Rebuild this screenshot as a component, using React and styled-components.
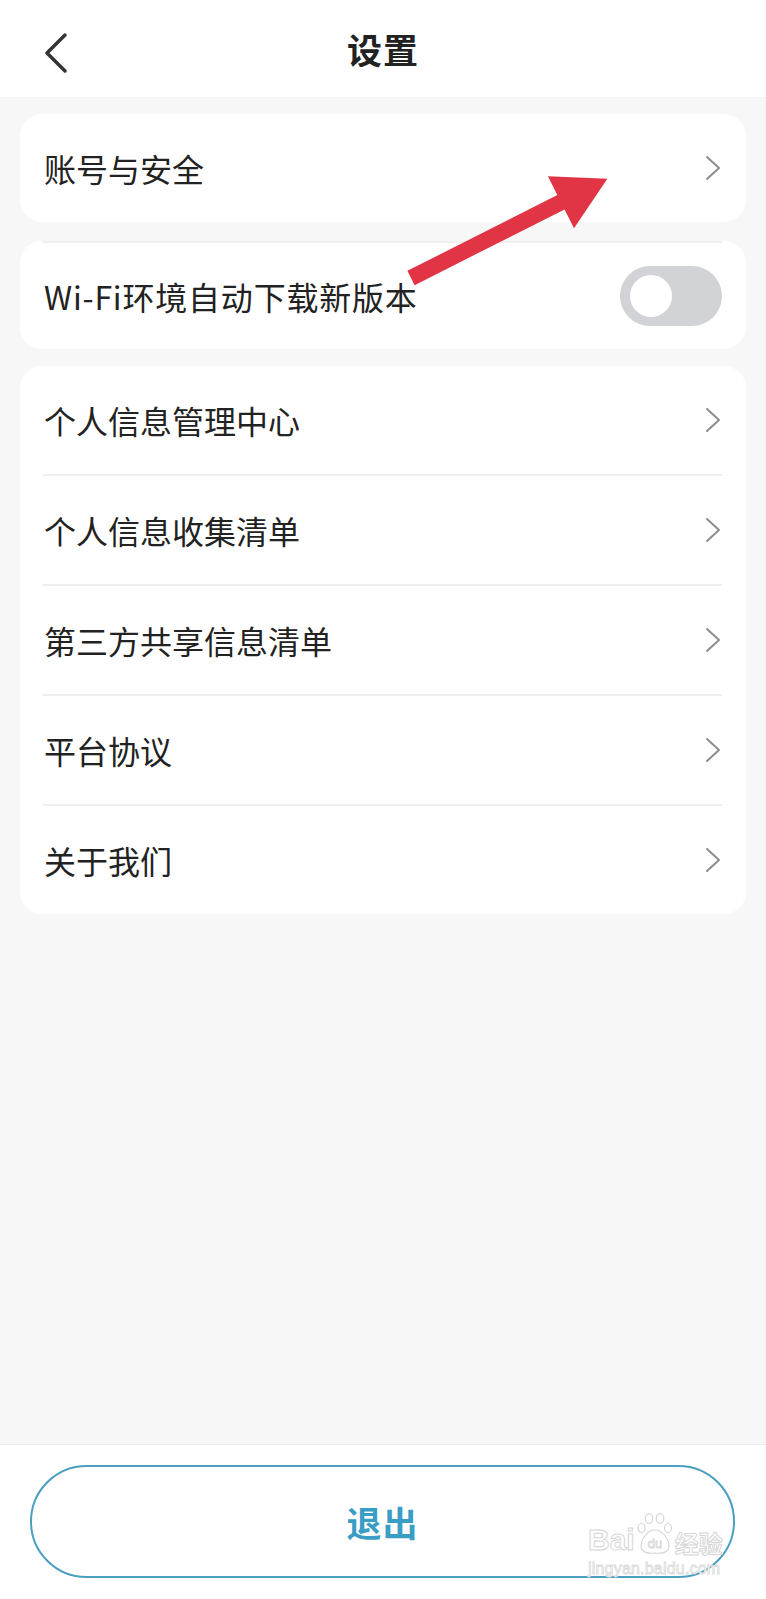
import styled, { createGlobalStyle } from "styled-components";

const GlobalStyle = createGlobalStyle`
  html, body {
    margin: 0;
    padding: 0;
    background: #f7f7f7;
  }
  body {
    font-family: "Noto Sans CJK SC", "Noto Sans", sans-serif;
  }
  #root {
    min-height: 100vh;
  }
`;

const Page = styled.div`
  position: relative;
  min-height: 100vh;
  display: flex;
  flex-direction: column;
  background: #f7f7f7;
`;

const Header = styled.header`
  height: 97px;
  background: #ffffff;
  display: flex;
  align-items: center;
  justify-content: center;
  position: relative;
  h1 {
    margin: 0;
    font-size: 35px;
    font-weight: 700;
    color: #222222;
    letter-spacing: 1px;
  }
`;

const BackButton = styled.button`
  position: absolute;
  left: 36px;
  top: 26px;
  width: 40px;
  height: 54px;
  border: none;
  background: none;
  padding: 0;
  display: flex;
  align-items: center;
  justify-content: center;
`;

const Content = styled.main`
  flex: 1;
  padding: 17px 20px 0;
  display: flex;
  flex-direction: column;
`;

const Card = styled.section`
  background: #ffffff;
  border-radius: 22px;
  margin-top: ${(p) => p.$gap || 0}px;
  overflow: hidden;
`;

const Row = styled.div`
  position: relative;
  height: ${(p) => p.$h || 108}px;
  padding: 0 24px 0 24px;
  display: flex;
  align-items: center;
  justify-content: space-between;
  span {
    font-size: 32px;
    color: #222222;
    line-height: 1;
    letter-spacing: ${(p) => p.$spacing || 0}px;
  }
`;

const TopLine = styled.div`
  height: 2px;
  margin: 0 24px 0 23px;
  background: #efefef;
`;

const Divider = styled.div`
  height: 2px;
  margin: 0 24px 0 23px;
  background: #eeeeee;
`;

const Toggle = styled.div`
  width: 102px;
  height: 60px;
  border-radius: 30px;
  background: #d2d3d6;
  display: flex;
  align-items: center;
  padding-left: 10px;
  box-sizing: border-box;
  &::after {
    content: "";
    width: 42px;
    height: 42px;
    border-radius: 50%;
    background: #ffffff;
  }
`;

const Footer = styled.footer`
  position: relative;
  height: 155px;
  background: #ffffff;
  border-top: 1px solid #eeeeee;
  box-sizing: border-box;
  padding: 20px 31px 0 30px;
`;

const LogoutButton = styled.button`
  width: 100%;
  height: 113px;
  border: 2px solid #4a9fc1;
  border-radius: 57px;
  background: #ffffff;
  color: #3a9dc6;
  font-family: "Noto Sans CJK SC", sans-serif;
  font-size: 35px;
  font-weight: 700;
  letter-spacing: 1px;
`;

const Watermark = styled.div`
  position: absolute;
  left: 588px;
  top: 1513px;
  width: 140px;
  pointer-events: none;
  color: #ffffff;
  font-family: "Liberation Sans", sans-serif;
`;

const MarkTop = styled.div`
  display: flex;
  align-items: flex-end;
  gap: 2px;
  span {
    font-size: 30px;
    font-weight: 700;
    line-height: 1;
    -webkit-text-stroke: 1px #d6d6d6;
  }
`;

const MarkUrl = styled.div`
  font-size: 16px;
  line-height: 1;
  margin-top: 6px;
  letter-spacing: 0.2px;
  -webkit-text-stroke: 0.8px #d9d9d9;
`;

const ArrowLayer = styled.svg`
  position: absolute;
  left: 0;
  top: 0;
  pointer-events: none;
`;

function Chevron() {
  return (
    <svg width="18" height="26" viewBox="0 0 18 26">
      <polyline points="3,2 15,13 3,24" fill="none" stroke="#8d8d8d" strokeWidth="2" strokeLinecap="round" strokeLinejoin="round" />
    </svg>
  );
}

function Paw() {
  return (
    <svg width="36" height="42" viewBox="0 0 36 42">
      <g fill="#ffffff" stroke="#d6d6d6" strokeWidth="1.2">
        <ellipse cx="4.5" cy="15" rx="3.5" ry="4.5" />
        <ellipse cx="12" cy="5.5" rx="3.8" ry="4.8" />
        <ellipse cx="23" cy="5.5" rx="3.8" ry="4.8" />
        <ellipse cx="31" cy="15" rx="3.5" ry="4.5" />
        <path d="M18 17 C10 17 4 27 4 33 C4 39 10 41 18 40 C26 41 32 39 32 33 C32 27 26 17 18 17 Z" />
      </g>
      <text x="18" y="35" textAnchor="middle" fontSize="13" fontFamily="Liberation Sans, sans-serif" fill="#ffffff" stroke="#d6d6d6" strokeWidth="0.8">du</text>
    </svg>
  );
}

const rows = ["个人信息管理中心", "个人信息收集清单", "第三方共享信息清单", "平台协议", "关于我们"];

export default function App() {
  return (
    <>
      <GlobalStyle />
      <Page>
        <Header>
          <BackButton aria-label="返回">
            <svg width="30" height="44" viewBox="0 0 30 44">
              <polyline points="24,4 6,22 24,40" fill="none" stroke="#333333" strokeWidth="3.5" strokeLinecap="round" strokeLinejoin="round" />
            </svg>
          </BackButton>
          <h1>设置</h1>
        </Header>
        <Content>
          <Card>
            <Row>
              <span>账号与安全</span>
              <Chevron />
            </Row>
          </Card>
          <Card $gap={19}>
            <TopLine />
            <Row $h={106} $spacing={0.8}>
              <span>Wi-Fi环境自动下载新版本</span>
              <Toggle />
            </Row>
          </Card>
          <Card $gap={17}>
            {rows.map((r, i) => (
              <div key={r}>
                {i > 0 && <Divider />}
                <Row>
                  <span>{r}</span>
                  <Chevron />
                </Row>
              </div>
            ))}
          </Card>
        </Content>
        <Footer>
          <LogoutButton>退出</LogoutButton>
        </Footer>
        <Watermark>
          <MarkTop>
            <span>Bai</span>
            <Paw />
            <span style={{ fontFamily: "Noto Sans CJK SC, sans-serif", fontSize: 24 }}>经验</span>
          </MarkTop>
          <MarkUrl>jingyan.baidu.com</MarkUrl>
        </Watermark>
        <ArrowLayer width="766" height="400" viewBox="0 0 766 400">
          <g transform="translate(411 278) rotate(-26.8)">
            <polygon points="0,-8 168,-8 168,-29 220,0 168,29 168,8 0,8" fill="#e13545" />
          </g>
        </ArrowLayer>
      </Page>
    </>
  );
}
